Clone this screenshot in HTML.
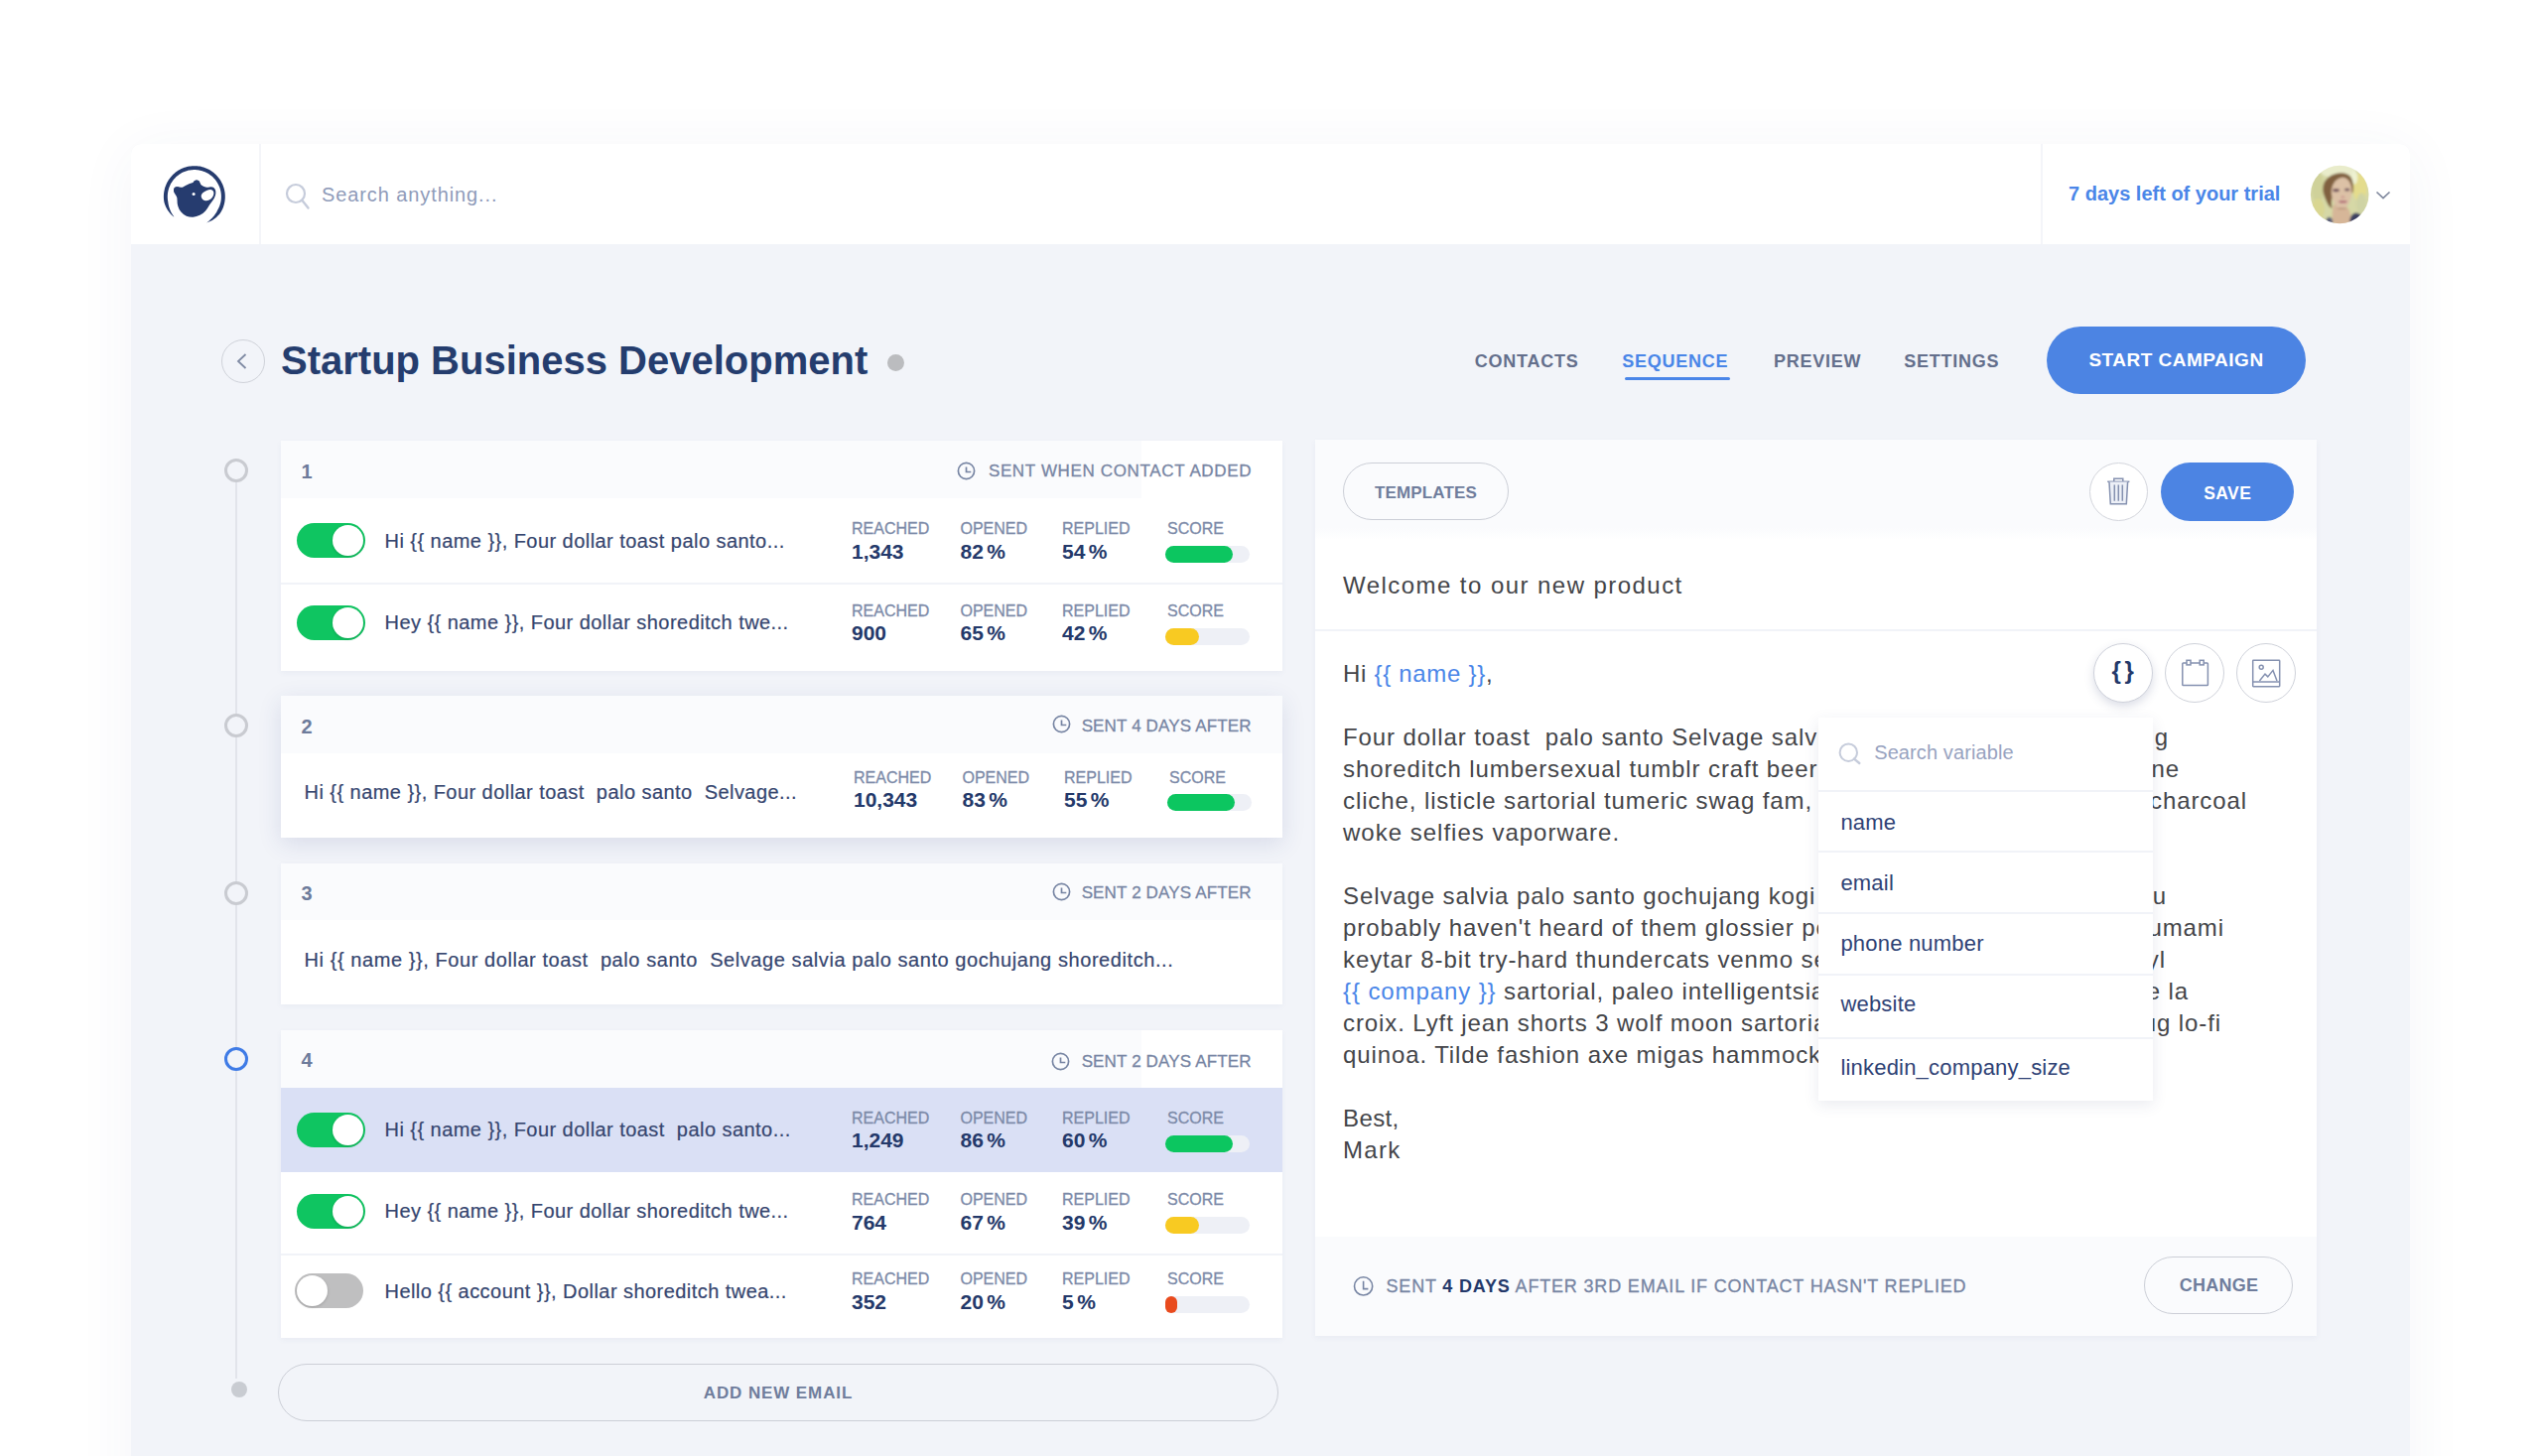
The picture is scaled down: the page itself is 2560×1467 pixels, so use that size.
<!DOCTYPE html><html><head><meta charset="utf-8"><title>Startup Business Development</title><style>
*{box-sizing:border-box;margin:0;padding:0}
html,body{width:2560px;height:1467px;overflow:hidden;background:#fff}
body{font-family:"Liberation Sans",sans-serif;position:relative;color:#354470}
.a{position:absolute;white-space:pre}
.app{position:absolute;left:132px;top:145px;width:2296px;height:1400px;background:#f2f4f9;border-radius:10px 10px 0 0;box-shadow:0 8px 60px rgba(60,70,120,.055)}
.top{position:absolute;left:0;top:0;width:2296px;height:101px;background:#fff;border-radius:10px 10px 0 0}
.vd{position:absolute;top:145px;width:2px;height:101px;background:#f4f5f9}
.card{position:absolute;background:#fff;box-shadow:0 2px 6px rgba(60,75,130,.05)}
.chead{position:absolute;left:0;top:0;width:100%;background:#fafbfd}
.num{position:absolute;font-size:20px;font-weight:700;color:#6d7b9b;line-height:24px}
.sent{position:absolute;font-size:17px;color:#7785a3;line-height:20px;white-space:pre;letter-spacing:.5px;-webkit-text-stroke:.3px #7785a3}
.row{position:absolute;left:-.5px;width:1010px;height:86px}
.tog{position:absolute;left:16.700px;top:25.500px;width:69px;height:35px;border-radius:18px;background:#0fc561}
.tog i{position:absolute;right:2px;top:2px;width:31px;height:31px;border-radius:50%;background:#fff;box-shadow:0 1px 3px rgba(0,0,0,.18)}
.tog.off{background:#bfbfc0;left:14.500px}
.tog.off i{right:auto;left:2px}
.txt{position:absolute;top:31px;font-size:20px;line-height:24px;letter-spacing:.45px;color:#36466f;white-space:pre;-webkit-text-stroke:.2px #36466f}
.lab{position:absolute;top:21px;font-size:16px;line-height:20px;color:#7c8aa8;white-space:pre;-webkit-text-stroke:.3px #7c8aa8}
.val{position:absolute;top:42.5px;font-size:21px;line-height:24px;font-weight:700;color:#24396a;white-space:pre}
.val i{font-style:normal;margin-left:3.5px}
.bar{position:absolute;left:892px;top:49px;width:85px;height:17px;border-radius:9px;background:#eef0f6}
.bar b{position:absolute;left:0;top:0;height:17px;border-radius:9px}
.div{position:absolute;height:2px;background:#f1f3f8}
.tc{position:absolute;width:24px;height:24px;border-radius:50%;border:3px solid #c9cbd1;background:#f2f4f9}
.pill{position:absolute;border-radius:40px;border:1.700px solid #cccfd7;background:transparent;color:#6f7d9c;font-weight:700;text-align:center;white-space:pre}
.circ{position:absolute;width:59px;height:59px;border-radius:50%;border:1.500px solid #cfd2da;background:#fff}
.bt{position:absolute;font-size:24px;line-height:32px;color:#444549;white-space:pre;letter-spacing:.9px}
.v{color:#4a86e8}
.dd{position:absolute;left:1831.800px;top:722.700px;width:337px;height:386.700px;background:#fff;box-shadow:0 4px 14px rgba(50,60,110,.10)}
.ddi{position:absolute;left:22.600px;font-size:22px;line-height:24px;color:#2f4275;white-space:pre;letter-spacing:.2px}
</style></head><body>
<div class="app"><div class="top"></div></div>
<div class="vd" style="left:261px"></div><div class="vd" style="left:2056px"></div>
<svg class="a" style="left:156px;top:158px" width="80" height="80" viewBox="0 0 80 80"><path d="M19.34 60.61 L18.32 59.88 L17.38 59.07 L16.47 58.20 L15.61 57.28 L14.79 56.32 L14.01 55.32 L13.28 54.28 L12.59 53.20 L11.95 52.09 L11.36 50.94 L10.82 49.77 L10.32 48.57 L9.88 47.34 L9.49 46.09 L9.26 44.81 L9.09 43.51 L8.97 42.21 L8.91 40.91 L8.90 39.60 L8.95 38.30 L9.06 37.00 L9.21 35.70 L9.43 34.42 L9.69 33.14 L10.01 31.87 L10.39 30.62 L10.81 29.39 L11.29 28.17 L11.82 26.98 L12.40 25.81 L13.02 24.66 L13.70 23.55 L14.42 22.46 L15.19 21.40 L16.00 20.38 L16.85 19.39 L17.74 18.44 L18.68 17.53 L19.65 16.65 L20.65 15.82 L21.69 15.03 L22.77 14.29 L23.87 13.59 L25.00 12.94 L26.16 12.34 L27.34 11.79 L28.55 11.29 L29.77 10.84 L31.02 10.44 L32.28 10.09 L33.55 9.80 L34.83 9.56 L36.12 9.38 L37.42 9.25 L38.72 9.17 L40.03 9.15 L41.33 9.19 L42.64 9.28 L43.93 9.42 L45.22 9.62 L46.50 9.87 L47.77 10.18 L49.03 10.54 L50.27 10.96 L51.49 11.42 L52.68 11.94 L53.86 12.50 L55.01 13.12 L56.14 13.78 L57.23 14.49 L58.30 15.25 L59.33 16.05 L60.32 16.89 L61.28 17.77 L62.21 18.70 L63.09 19.66 L63.93 20.66 L64.73 21.69 L65.48 22.76 L66.19 23.85 L66.85 24.98 L67.47 26.13 L68.03 27.31 L68.55 28.51 L69.01 29.73 L69.42 30.97 L69.78 32.22 L70.09 33.49 L70.34 34.77 L70.54 36.06 L70.68 37.36 L70.77 38.66 L70.80 39.96 L70.78 41.27 L70.70 42.57 L70.57 43.87 L70.38 45.16 L70.14 46.45 L69.85 47.72 L69.50 48.98 L69.10 50.22 L68.65 51.44 L68.14 52.65 L67.59 53.83 L66.98 54.99 L66.33 56.11 L65.53 57.15 L64.70 58.15 L63.83 59.12 L62.91 60.03 L61.97 60.90 L60.98 61.73 L59.97 62.51 L58.92 63.24 L57.85 63.91 L56.75 64.54 L55.63 65.11 L54.48 65.61 L53.31 66.05 L52.11 66.38 L52.11 66.38 L53.09 65.63 L54.07 64.90 L55.02 64.15 L55.94 63.37 L56.82 62.56 L57.67 61.72 L58.48 60.85 L59.25 59.96 L59.98 59.04 L60.67 58.09 L61.32 57.12 L61.92 56.14 L62.48 55.13 L63.00 54.10 L63.57 53.11 L64.09 52.10 L64.58 51.07 L65.02 50.01 L65.41 48.94 L65.76 47.86 L66.07 46.76 L66.33 45.65 L66.54 44.53 L66.70 43.40 L66.81 42.26 L66.88 41.12 L66.90 39.98 L66.87 38.84 L66.79 37.70 L66.67 36.57 L66.50 35.44 L66.28 34.32 L66.01 33.21 L65.69 32.12 L65.34 31.03 L64.93 29.97 L64.48 28.92 L63.99 27.89 L63.45 26.88 L62.87 25.90 L62.25 24.94 L61.59 24.01 L60.90 23.11 L60.16 22.24 L59.39 21.39 L58.58 20.59 L57.74 19.81 L56.87 19.08 L55.97 18.38 L55.04 17.72 L54.08 17.10 L53.10 16.52 L52.10 15.98 L51.07 15.49 L50.02 15.03 L48.95 14.63 L47.87 14.27 L46.78 13.95 L45.67 13.68 L44.55 13.46 L43.42 13.29 L42.29 13.16 L41.15 13.08 L40.01 13.05 L38.87 13.07 L37.73 13.13 L36.59 13.25 L35.46 13.41 L34.34 13.62 L33.23 13.87 L32.13 14.18 L31.04 14.52 L29.97 14.92 L28.92 15.36 L27.89 15.84 L26.87 16.37 L25.88 16.93 L24.92 17.54 L23.98 18.19 L23.07 18.88 L22.19 19.61 L21.34 20.37 L20.53 21.17 L19.75 22.00 L19.00 22.86 L18.29 23.76 L17.62 24.68 L16.99 25.63 L16.40 26.61 L15.86 27.61 L15.35 28.63 L14.89 29.68 L14.47 30.74 L14.10 31.82 L13.77 32.91 L13.49 34.02 L13.26 35.13 L13.07 36.26 L12.94 37.39 L12.85 38.53 L12.80 39.67 L12.81 40.81 L12.86 41.95 L12.97 43.08 L13.11 44.21 L13.30 45.34 L13.44 46.48 L13.62 47.62 L13.85 48.76 L14.13 49.89 L14.46 51.01 L14.83 52.12 L15.25 53.23 L15.71 54.32 L16.22 55.40 L16.77 56.46 L17.37 57.51 L18.00 58.54 L18.67 59.56 L19.34 60.61Z" fill="#263c6f"/><path d="M19.04 34.62 Q18.96 33.52 19.37 32.28 Q19.78 31.04 20.88 30.58 Q21.98 30.11 23.35 30.30 Q24.73 30.49 26.10 30.77 Q27.47 31.04 29.12 29.95 Q30.77 28.85 32.97 27.88 Q35.16 26.92 36.81 26.59 Q38.46 26.26 39.01 25.22 Q39.56 24.18 40.93 23.76 Q42.31 23.35 43.54 23.90 Q44.78 24.45 45.33 25.69 Q45.88 26.92 46.29 27.75 Q46.70 28.57 48.08 29.26 Q49.45 29.95 51.10 30.49 Q52.75 31.04 53.85 30.69 Q54.95 30.33 56.32 30.22 Q57.69 30.11 58.93 30.77 Q60.16 31.43 60.85 33.02 Q61.54 34.62 61.32 37.09 Q61.10 39.56 59.81 41.76 Q58.52 43.96 56.87 45.88 Q55.22 47.80 54.12 50.00 Q53.02 52.20 50.82 54.67 Q48.63 57.14 45.33 58.79 Q42.03 60.44 38.60 60.71 Q35.16 60.99 31.87 59.67 Q28.57 58.35 26.37 55.60 Q24.18 52.86 23.30 49.64 Q22.42 46.43 22.53 43.68 Q22.64 40.93 21.62 39.42 Q20.60 37.91 19.86 36.81 Q19.12 35.71 19.04 34.62Z" fill="#263c6f"/><circle cx="22.25" cy="33.35" r="3.19" fill="#263c6f"/><circle cx="42.20" cy="26.48" r="3.08" fill="#263c6f"/><path d="M47.20 37.72 Q47.80 36.70 49.45 35.60 Q51.10 34.51 52.75 33.74 Q54.40 32.97 56.18 33.10 Q57.97 33.24 58.79 34.48 Q59.62 35.71 59.34 37.50 Q59.07 39.29 57.83 40.93 Q56.59 42.58 54.67 43.54 Q52.75 44.51 50.96 44.18 Q49.18 43.85 47.99 42.66 Q46.81 41.48 46.70 40.11 Q46.59 38.74 47.20 37.72Z" fill="#fff"/><circle cx="39.12" cy="37.47" r="1.55" fill="#fff"/></svg>
<svg class="a" style="left:286px;top:183px" width="28" height="30" viewBox="0 0 28 30"><circle cx="12" cy="12" r="9" fill="none" stroke="#c6ccdb" stroke-width="2.2"/><path d="M18.500 19 L24.500 26.500" stroke="#c6ccdb" stroke-width="2.400" stroke-linecap="round"/></svg>
<div class="a" style="left:324px;top:184px;font-size:20px;line-height:24px;color:#8f9bb9;letter-spacing:.9px">Search anything...</div>
<div class="a" style="left:2084px;top:183px;font-size:20px;line-height:24px;color:#4a86e8;font-weight:700">7 days left of your trial</div>
<svg class="a" style="left:2317px;top:156px" width="100" height="80" viewBox="0 0 100 80"><defs><clipPath id="av"><circle cx="40.2" cy="40" r="29.3"/></clipPath><filter id="bl" x="-10%" y="-10%" width="120%" height="120%"><feGaussianBlur stdDeviation="0.9"/></filter></defs><g clip-path="url(#av)"><g filter="url(#bl)"><rect x="0" y="0" width="100" height="80" fill="#d6d8a6"/><ellipse cx="38.46" cy="15.38" rx="18.13" ry="8.24" fill="#e9eccb" /><ellipse cx="60.44" cy="32.97" rx="7.14" ry="14.29" fill="#e4dc8c" /><ellipse cx="62.09" cy="49.45" rx="4.95" ry="10.99" fill="#cfd3a4" /><ellipse cx="18.13" cy="32.97" rx="6.04" ry="16.48" fill="#cfd19a" /><ellipse cx="18.13" cy="54.95" rx="6.59" ry="10.99" fill="#d9d692" /><ellipse cx="54.95" cy="23.08" rx="3.30" ry="6.59" fill="#eef2d2" /><path d="M23.76 38.74 Q22.80 35.71 23.63 31.04 Q24.45 26.37 28.16 23.21 Q31.87 20.05 36.26 18.96 Q40.66 17.86 44.78 18.54 Q48.90 19.23 51.10 21.98 Q53.30 24.73 53.79 29.40 Q54.29 34.07 53.65 37.09 Q53.02 40.11 51.24 36.54 Q49.45 32.97 41.21 35.71 Q32.97 38.46 32.28 43.96 Q31.59 49.45 32.28 51.79 Q32.97 54.12 31.46 53.43 Q29.95 52.75 28.43 50.00 Q26.92 47.25 25.82 44.51 Q24.73 41.76 23.76 38.74Z" fill="#80603f"/><path d="M33.30 53.85 Q34.07 48.35 36.81 50.00 Q39.56 51.65 43.13 51.37 Q46.70 51.10 48.76 54.12 Q50.82 57.14 51.79 64.01 Q52.75 70.88 42.86 71.15 Q32.97 71.43 32.75 65.38 Q32.53 59.34 33.30 53.85Z" fill="#d6b698"/><path d="M31.92 39.70 Q31.32 35.71 32.83 31.18 Q34.34 26.65 38.05 24.45 Q41.76 22.25 45.05 22.99 Q48.35 23.74 50.22 27.25 Q52.09 30.77 52.28 34.62 Q52.47 38.46 51.73 42.03 Q50.99 45.60 49.73 48.49 Q48.46 51.37 46.21 53.30 Q43.96 55.22 41.76 54.95 Q39.56 54.67 37.36 52.47 Q35.16 50.27 33.85 46.98 Q32.53 43.68 31.92 39.70Z" fill="#dcc1a6"/><path d="M50.55 65.11 Q51.65 60.99 53.57 59.62 Q55.49 58.24 57.69 58.52 Q59.89 58.79 62.91 62.36 Q65.93 65.93 60.44 69.51 Q54.95 73.08 52.20 71.15 Q49.45 69.23 50.55 65.11Z" fill="#3b3f60"/><path d="M26.37 67.58 Q26.37 63.74 28.57 62.91 Q30.77 62.09 32.14 64.01 Q33.52 65.93 33.24 68.68 Q32.97 71.43 29.67 71.43 Q26.37 71.43 26.37 67.58Z" fill="#5a5f78"/><ellipse cx="36.54" cy="35.71" rx="3.41" ry="1.48" fill="#684653" /><ellipse cx="47.69" cy="35.16" rx="2.75" ry="1.37" fill="#6f515c" /><ellipse cx="43.41" cy="42.58" rx="1.92" ry="1.21" fill="#cf9c92" /><ellipse cx="43.41" cy="47.36" rx="4.29" ry="1.26" fill="#b06a76" /><ellipse cx="42.31" cy="54.12" rx="4.95" ry="0.99" fill="#b9957a" /></g></g></svg>
<svg class="a" style="left:2392px;top:191px" width="18" height="12" viewBox="0 0 18 12"><path d="M2.500 2.500 L9 8.500 L15.500 2.500" fill="none" stroke="#7f889d" stroke-width="1.7"/></svg>
<div class="a" style="left:223px;top:342px;width:44px;height:44px;border-radius:50%;border:1.600px solid #cfd2d9"></div>
<svg class="a" style="left:236px;top:354px" width="16" height="20" viewBox="0 0 16 20"><path d="M11.500 3 L4 10 L11.500 17" fill="none" stroke="#7f8aa3" stroke-width="1.800"/></svg>
<div class="a" style="left:283px;top:340px;font-size:40px;line-height:46px;font-weight:700;color:#253d6e">Startup Business Development</div>
<div class="a" style="left:893.500px;top:357px;width:17px;height:17px;border-radius:50%;background:#bbbcbf"></div>
<div class="a" style="left:1485.8px;top:352.600px;font-size:18px;line-height:22px;font-weight:700;letter-spacing:.75px;color:#646f8c">CONTACTS</div>
<div class="a" style="left:1634.2px;top:352.600px;font-size:18px;line-height:22px;font-weight:700;letter-spacing:.75px;color:#4a86e8">SEQUENCE</div>
<div class="a" style="left:1786.9px;top:352.600px;font-size:18px;line-height:22px;font-weight:700;letter-spacing:.75px;color:#646f8c">PREVIEW</div>
<div class="a" style="left:1918.3px;top:352.600px;font-size:18px;line-height:22px;font-weight:700;letter-spacing:.75px;color:#646f8c">SETTINGS</div>
<div class="a" style="left:1637px;top:380px;width:106px;height:3px;border-radius:2px;background:#4a86e8"></div>
<div class="a" style="left:2062px;top:329.300px;width:261px;height:68px;border-radius:34px;background:#4c84e3;color:#fff;font-size:19px;line-height:68px;font-weight:700;letter-spacing:.5px;text-align:center">START CAMPAIGN</div>
<div class="a" style="left:237px;top:474px;width:2px;height:915px;background:#e2e4eb"></div>
<div class="tc" style="left:225.8px;top:461.8px;border-color:#c9cbd1"></div>
<div class="tc" style="left:225.8px;top:718.5px;border-color:#c9cbd1"></div>
<div class="tc" style="left:225.8px;top:887.5px;border-color:#c9cbd1"></div>
<div class="tc" style="left:225.8px;top:1054.5px;border-color:#3f7be6"></div>
<div class="a" style="left:233px;top:1392px;width:16px;height:16px;border-radius:50%;background:#c9ccd2"></div>
<div class="card" style="left:282.500px;top:444px;width:1009.500px;height:232px"><div class="chead" style="height:58px"></div><div class="a" style="left:867.500px;top:0;width:142px;height:58px;background:#fff"></div><span class="num" style="left:21px;top:18.5px">1</span><span class="sent" style="right:30.85px;top:20.5px;letter-spacing:0.65px">SENT WHEN CONTACT ADDED</span><div class="row" style="top:57.700000000000045px"><span class="tog"><i></i></span><span class="txt" style="left:105.5px">Hi {{ name }}, Four dollar toast palo santo...</span><span class="lab" style="left:576px;top:21.7px">REACHED</span><span class="lab" style="left:685.5px;top:21.7px">OPENED</span><span class="lab" style="left:788px;top:21.7px">REPLIED</span><span class="lab" style="left:894px;top:21.7px">SCORE</span><span class="val" style="left:576px;top:42.4px">1,343</span><span class="val" style="left:685.5px;top:42.4px">82<i>%</i></span><span class="val" style="left:788px;top:42.4px">54<i>%</i></span><span class="bar" style="left:892px;top:48.6px"><b style="width:68px;background:#0cc660"></b></span></div><div class="div" style="left:0;top:143px;width:1009px"></div><div class="row" style="top:140px"><span class="tog"><i></i></span><span class="txt" style="left:105.5px">Hey {{ name }}, Four dollar shoreditch twe...</span><span class="lab" style="left:576px;top:21.7px">REACHED</span><span class="lab" style="left:685.5px;top:21.7px">OPENED</span><span class="lab" style="left:788px;top:21.7px">REPLIED</span><span class="lab" style="left:894px;top:21.7px">SCORE</span><span class="val" style="left:576px;top:42.4px">900</span><span class="val" style="left:685.5px;top:42.4px">65<i>%</i></span><span class="val" style="left:788px;top:42.4px">42<i>%</i></span><span class="bar" style="left:892px;top:48.6px"><b style="width:34px;background:#f8ca22"></b></span></div></div>
<svg class="a" style="left:963.0px;top:464.1px" width="21" height="21" viewBox="0 0 21 21"><circle cx="10.500" cy="10.500" r="8.100" fill="none" stroke="#7785a3" stroke-width="1.700"/><path d="M10.500 6.500 V11.500 H15.300" fill="none" stroke="#7785a3" stroke-width="1.700"/></svg>
<div class="card" style="left:282.500px;top:701px;width:1009.500px;height:143px;box-shadow:0 6px 22px rgba(50,65,130,.13)"><div class="chead" style="height:58px"></div><span class="num" style="left:21px;top:18.5px">2</span><span class="sent" style="right:31.35px;top:20.5px;letter-spacing:0.15px">SENT 4 DAYS AFTER</span><div class="row" style="top:54px"><span class="txt" style="left:24.500px">Hi {{ name }}, Four dollar toast  palo santo  Selvage...</span><span class="lab" style="left:578px;top:19.0px">REACHED</span><span class="lab" style="left:687.5px;top:19.0px">OPENED</span><span class="lab" style="left:790px;top:19.0px">REPLIED</span><span class="lab" style="left:896px;top:19.0px">SCORE</span><span class="val" style="left:578px;top:38.62px">10,343</span><span class="val" style="left:687.5px;top:38.62px">83<i>%</i></span><span class="val" style="left:790px;top:38.62px">55<i>%</i></span><span class="bar" style="left:894px;top:45.09px"><b style="width:68px;background:#0cc660"></b></span></div></div>
<svg class="a" style="left:1059.0px;top:719.0px" width="21" height="21" viewBox="0 0 21 21"><circle cx="10.500" cy="10.500" r="8.100" fill="none" stroke="#7785a3" stroke-width="1.700"/><path d="M10.500 6.500 V11.500 H15.300" fill="none" stroke="#7785a3" stroke-width="1.700"/></svg>
<div class="card" style="left:282.500px;top:870px;width:1009.500px;height:142px"><div class="chead" style="height:57px"></div><span class="num" style="left:21px;top:18.0px">3</span><span class="sent" style="right:31.35px;top:19.5px;letter-spacing:0.15px">SENT 2 DAYS AFTER</span><div class="row" style="top:53.5px"><span class="txt" style="left:24.500px"><span style="letter-spacing:.57px">Hi {{ name }}, Four dollar toast  palo santo  Selvage salvia palo santo gochujang shoreditch...</span></span></div></div>
<svg class="a" style="left:1059.0px;top:887.5px" width="21" height="21" viewBox="0 0 21 21"><circle cx="10.500" cy="10.500" r="8.100" fill="none" stroke="#7785a3" stroke-width="1.700"/><path d="M10.500 6.500 V11.500 H15.300" fill="none" stroke="#7785a3" stroke-width="1.700"/></svg>
<div class="card" style="left:282.500px;top:1038px;width:1009.500px;height:310px"><div class="chead" style="height:57.6px"></div><div class="a" style="left:867.500px;top:0;width:142px;height:57.6px;background:#fff"></div><span class="num" style="left:21px;top:18.3px">4</span><span class="sent" style="right:31.35px;top:22.3px;letter-spacing:0.15px">SENT 2 DAYS AFTER</span><div class="a" style="left:0;top:57.600px;width:1009px;height:85px;background:#dae0f5"></div><div class="row" style="top:57px"><span class="tog"><i></i></span><span class="txt" style="left:105.5px">Hi {{ name }}, Four dollar toast  palo santo...</span><span class="lab" style="left:576px;top:21.7px">REACHED</span><span class="lab" style="left:685.5px;top:21.7px">OPENED</span><span class="lab" style="left:788px;top:21.7px">REPLIED</span><span class="lab" style="left:894px;top:21.7px">SCORE</span><span class="val" style="left:576px;top:42.4px">1,249</span><span class="val" style="left:685.5px;top:42.4px">86<i>%</i></span><span class="val" style="left:788px;top:42.4px">60<i>%</i></span><span class="bar" style="left:892px;top:48.6px"><b style="width:68px;background:#0cc660"></b></span></div><div class="row" style="top:139.29999999999995px"><span class="tog"><i></i></span><span class="txt" style="left:105.5px">Hey {{ name }}, Four dollar shoreditch twe...</span><span class="lab" style="left:576px;top:21.7px">REACHED</span><span class="lab" style="left:685.5px;top:21.7px">OPENED</span><span class="lab" style="left:788px;top:21.7px">REPLIED</span><span class="lab" style="left:894px;top:21.7px">SCORE</span><span class="val" style="left:576px;top:42.4px">764</span><span class="val" style="left:685.5px;top:42.4px">67<i>%</i></span><span class="val" style="left:788px;top:42.4px">39<i>%</i></span><span class="bar" style="left:892px;top:48.6px"><b style="width:34px;background:#f8ca22"></b></span></div><div class="div" style="left:0;top:225px;width:1009px"></div><div class="row" style="top:219.79999999999995px"><span class="tog off"><i></i></span><span class="txt" style="left:105.5px">Hello {{ account }}, Dollar shoreditch twea...</span><span class="lab" style="left:576px;top:21.7px">REACHED</span><span class="lab" style="left:685.5px;top:21.7px">OPENED</span><span class="lab" style="left:788px;top:21.7px">REPLIED</span><span class="lab" style="left:894px;top:21.7px">SCORE</span><span class="val" style="left:576px;top:42.4px">352</span><span class="val" style="left:685.5px;top:42.4px">20<i>%</i></span><span class="val" style="left:788px;top:42.4px">5<i>%</i></span><span class="bar" style="left:892px;top:48.6px"><b style="width:12px;background:#e94b1e"></b></span></div></div>
<svg class="a" style="left:1057.5px;top:1058.5px" width="21" height="21" viewBox="0 0 21 21"><circle cx="10.500" cy="10.500" r="8.100" fill="none" stroke="#7785a3" stroke-width="1.700"/><path d="M10.500 6.500 V11.500 H15.300" fill="none" stroke="#7785a3" stroke-width="1.700"/></svg>
<div class="pill" style="left:280px;top:1374px;width:1008px;height:58px;font-size:17px;line-height:58.500px;letter-spacing:.9px">ADD NEW EMAIL</div>
<div class="card" style="left:1325px;top:443px;width:1009.200px;height:903.300px"><div class="chead" style="height:101px;background:linear-gradient(#fafbfd 88%,#fff)"></div><div class="chead" style="top:803.200px;height:100.100px"></div><div class="div" style="left:0;top:190.500px;width:1008.700px"></div></div>
<div class="pill" style="left:1353px;top:466px;width:167px;height:58px;font-size:17px;line-height:59px;letter-spacing:.15px">TEMPLATES</div>
<div class="circ" style="left:2104.500px;top:466px;border-color:#d3d5dc"></div>
<svg class="a" style="left:2119px;top:478px" width="30" height="34" viewBox="2119 478 30 34"><g fill="none" stroke="#8591b0" stroke-width="1.500"><path d="M2123.200 485.300 H2145.400"/><path d="M2129.800 485 V482.300 H2138.800 V485"/><path d="M2125 485.600 L2126.300 507.700 H2142.300 L2143.600 485.600" fill="#edf0f7"/><path d="M2130.300 488.500 V504.800 M2134.300 488.500 V504.800 M2138.300 488.500 V504.800"/></g></svg>
<div class="a" style="left:2176.500px;top:466px;width:134.500px;height:58.500px;border-radius:30px;background:#4c84e3;color:#fff;font-size:17.500px;line-height:63px;font-weight:700;letter-spacing:.4px;text-align:center;text-indent:1px">SAVE</div>
<div class="bt" style="left:1353px;top:574px;letter-spacing:1.45px">Welcome to our new product</div>
<div class="circ" style="left:2108.700px;top:648.300px;width:60px;height:60px;border-color:#cfd2db;box-shadow:0 4px 10px rgba(50,60,110,.17)"></div>
<div class="circ" style="left:2180.900px;top:648.300px;width:60px;height:60px"></div>
<div class="circ" style="left:2253.100px;top:648.300px;width:60px;height:60px"></div>
<div class="a" style="left:2108.700px;top:648.300px;width:60px;height:60px;text-align:center;font-size:24px;line-height:56px;color:#24396a;font-weight:700;letter-spacing:-1.500px;text-indent:-1.500px">{ }</div>
<svg class="a" style="left:2194px;top:660px" width="36" height="36" viewBox="2194 660 36 36"><g fill="none" stroke="#8591b0" stroke-width="1.500"><rect x="2198.800" y="668" width="25.600" height="22.600" rx=".8"/><rect x="2203" y="665.300" width="4" height="4.600" fill="#fff"/><rect x="2216.200" y="665.300" width="4" height="4.600" fill="#fff"/></g></svg>
<svg class="a" style="left:2265px;top:660px" width="36" height="36" viewBox="2265 660 36 36"><g fill="none" stroke="#8591b0" stroke-width="1.500"><rect x="2269.700" y="665.300" width="27" height="26.400" rx=".6"/><circle cx="2278.200" cy="672.200" r="2"/><path d="M2276.400 686 L2282 679.100 L2284.800 681.900 L2290 675.400 L2294 686"/><path d="M2269.700 687 H2296.700"/></g></svg>
<div class="bt" style="left:1353px;top:662.8px;letter-spacing:0.7px">Hi <span class="v">{{ name }}</span>,</div>
<div class="bt" style="left:1353px;top:726.8px">Four dollar toast  palo santo Selvage salvia palo</div>
<div class="bt" style="right:375px;top:726.8px">santo gochujang</div>
<div class="bt" style="left:1353px;top:758.8px">shoreditch lumbersexual tumblr craft beer tote</div>
<div class="bt" style="right:364px;top:758.8px">bag everyone</div>
<div class="bt" style="left:1353px;top:790.8px">cliche, listicle sartorial tumeric swag fam, hexagon</div>
<div class="bt" style="right:296px;top:790.8px">activated charcoal</div>
<div class="bt" style="left:1353px;top:822.8px;letter-spacing:1.0px">woke selfies vaporware.</div>
<div class="bt" style="left:1353px;top:886.8px">Selvage salvia palo santo gochujang kogi pabst</div>
<div class="bt" style="right:377px;top:886.8px">you</div>
<div class="bt" style="left:1353px;top:918.8px">probably haven't heard of them glossier poke</div>
<div class="bt" style="right:319px;top:918.8px">umami</div>
<div class="bt" style="left:1353px;top:950.8px">keytar 8-bit try-hard thundercats venmo seitan</div>
<div class="bt" style="right:378px;top:950.8px">vinyl</div>
<div class="bt" style="left:1353px;top:982.8px"><span class="v">{{ company }}</span> sartorial, paleo intelligentsia</div>
<div class="bt" style="right:355px;top:982.8px">de la</div>
<div class="bt" style="left:1353px;top:1014.8px">croix. Lyft jean shorts 3 wolf moon sartorial</div>
<div class="bt" style="right:322px;top:1014.8px">tbh bushwick pug lo-fi</div>
<div class="bt" style="left:1353px;top:1046.8px">quinoa. Tilde fashion axe migas hammock.</div>
<div class="bt" style="left:1353px;top:1110.8px;letter-spacing:0.4px">Best,</div>
<div class="bt" style="left:1353px;top:1142.8px;letter-spacing:1.3px">Mark</div>
<div class="dd">
<svg class="a" style="left:18px;top:22px" width="28" height="30" viewBox="0 0 28 30"><circle cx="12.300" cy="13.200" r="8.700" fill="none" stroke="#c6ccdb" stroke-width="2"/><path d="M18 19.600 L23.300 24" stroke="#c6ccdb" stroke-width="2.400" stroke-linecap="round"/></svg>
<span class="ddi" style="left:56.400px;top:23.800px;color:#98a3c0;font-size:20px;letter-spacing:.1px">Search variable</span>
<div class="div" style="left:0;top:73.1px;width:337px"></div>
<span class="ddi" style="top:94.5px">name</span>
<div class="div" style="left:0;top:134.8px;width:337px"></div>
<span class="ddi" style="top:155px">email</span>
<div class="div" style="left:0;top:196.2px;width:337px"></div>
<span class="ddi" style="top:216.1px">phone number</span>
<div class="div" style="left:0;top:258.1px;width:337px"></div>
<span class="ddi" style="top:277.6px">website</span>
<div class="div" style="left:0;top:322.1px;width:337px"></div>
<span class="ddi" style="top:341.5px">linkedin_company_size</span>
</div>
<svg class="a" style="left:1362px;top:1284px" width="24" height="24" viewBox="1362 1284 24 24"><circle cx="1373.600" cy="1295.900" r="9.100" fill="none" stroke="#7785a3" stroke-width="1.600"/><path d="M1373.600 1290.700 V1298.600 H1378.400" fill="none" stroke="#7785a3" stroke-width="1.600"/></svg>
<div class="a" style="left:1396.500px;top:1285.300px;font-size:18px;line-height:22px;color:#7785a3;letter-spacing:.83px;-webkit-text-stroke:.3px #7785a3">SENT <b style="color:#24396a;-webkit-text-stroke:0">4 DAYS</b> AFTER 3RD EMAIL IF CONTACT HASN'T REPLIED</div>
<div class="pill" style="left:2160px;top:1266px;width:150px;height:58px;font-size:18px;line-height:57.500px;letter-spacing:.25px;text-indent:1px">CHANGE</div>
</body></html>
